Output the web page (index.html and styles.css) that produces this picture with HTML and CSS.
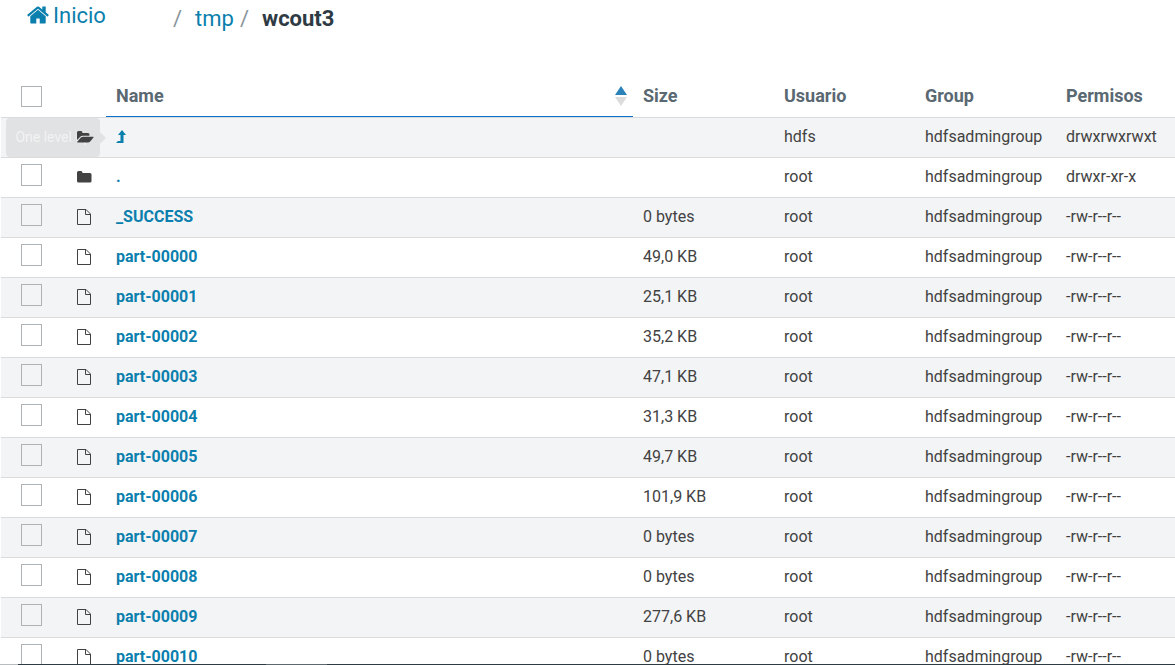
FILE: index.html
```
<!DOCTYPE html>
<html lang="es">
<head>
<meta charset="utf-8">
<title>wcout3</title>
<link rel="stylesheet" href="styles.css">
</head>
<body>
<svg class="sprite" aria-hidden="true">
  <symbol id="home" viewBox="0 0 1792 1792"><path d="M1472 992v480q0 26-19 45t-45 19h-384v-384h-256v384h-384q-26 0-45-19t-19-45v-480q0-1 .5-3t.5-3l575-474 575 474q1 2 1 6zm223-69l-62 74q-8 9-21 11h-3q-13 0-21-7l-692-577-692 577q-12 8-24 7-13-2-21-11l-62-74q-8-10-7-23.5t11-21.5l719-599q32-26 76-26t76 26l244 204v-195q0-14 9-23t23-9h192q14 0 23 9t9 23v408l219 182q10 8 11 21.5t-7 23.5z"/></symbol>
  <symbol id="folder-open" viewBox="0 0 18 16"><path d="M1 11V3.500Q1 2 2.500 2H5Q6.500 2 6.500 4H12Q13.500 4 13.500 5.500V6.800H7Q5 6.800 4 8Z"/><path d="M5 8.500Q5.700 7.800 7 7.800H17Q18 7.900 17.300 8.800L14.200 12.500Q13.200 13.500 12 13.500H1.700Q.8 13.400 1.400 12.500Z"/></symbol>
  <symbol id="folder" viewBox="0 0 18 16"><path d="M1 3.500Q1 2 2.500 2H5Q6.500 2 6.500 4H14Q15.500 4 15.500 5.500V12Q15.500 13.500 14 13.500H2.500Q1 13.500 1 12Z"/></symbol>
  <symbol id="file" viewBox="0 0 18 16"><path d="M1.500 .5H10L14.500 5V15.500H1.500ZM9.500 .5V5.500H14.500" fill="none" stroke="currentColor"/></symbol>
  <symbol id="level-up" viewBox="0 0 12 14"><path d="M0 13L2 11H4.500V5H2L6 0L10 5H7.500V13Z"/></symbol>
</svg>

<nav class="breadcrumb" aria-label="Ruta">
  <a class="home" href="#"><svg class="home-icon"><use href="#home"/></svg>Inicio</a>
  <ol class="path">
    <li><span class="slash">/</span><a href="#">tmp</a></li>
    <li><span class="slash">/</span><strong>wcout3</strong></li>
  </ol>
</nav>

<main class="browser">
<table class="files">
  <colgroup><col class="c-check"><col class="c-icon"><col class="c-name"><col class="c-attr"><col class="c-attr"><col class="c-attr"><col class="c-perm"></colgroup>
  <thead>
    <tr><th><input type="checkbox" aria-label="Seleccionar todo"></th><th></th><th class="sorted" aria-sort="ascending"><span class="sort-head">Name<svg class="sort" viewBox="0 0 12 20"><path class="up" d="M6 0L12 9H0Z"/><path class="down" d="M0 11H12L6 20Z"/></svg></span></th><th>Size</th><th>Usuario</th><th>Group</th><th>Permisos</th></tr>
  </thead>
  <tbody>
    <tr><td></td><td class="icon-cell"><svg class="icon"><use href="#folder-open"/></svg><span class="tooltip" role="tooltip">One level up</span></td><td><a href="#" aria-label="One level up"><svg class="up-icon"><use href="#level-up"/></svg></a></td><td></td><td>hdfs</td><td>hdfsadmingroup</td><td>drwxrwxrwxt</td></tr>
    <tr><td><input type="checkbox" aria-label="."></td><td><svg class="icon"><use href="#folder"/></svg></td><td><a href="#">.</a></td><td></td><td>root</td><td>hdfsadmingroup</td><td>drwxr-xr-x</td></tr>
    <tr><td><input type="checkbox" aria-label="_SUCCESS"></td><td><svg class="icon"><use href="#file"/></svg></td><td><a href="#">_SUCCESS</a></td><td>0 bytes</td><td>root</td><td>hdfsadmingroup</td><td>-rw-r--r--</td></tr>
    <tr><td><input type="checkbox" aria-label="part-00000"></td><td><svg class="icon"><use href="#file"/></svg></td><td><a href="#">part-00000</a></td><td>49,0 KB</td><td>root</td><td>hdfsadmingroup</td><td>-rw-r--r--</td></tr>
    <tr><td><input type="checkbox" aria-label="part-00001"></td><td><svg class="icon"><use href="#file"/></svg></td><td><a href="#">part-00001</a></td><td>25,1 KB</td><td>root</td><td>hdfsadmingroup</td><td>-rw-r--r--</td></tr>
    <tr><td><input type="checkbox" aria-label="part-00002"></td><td><svg class="icon"><use href="#file"/></svg></td><td><a href="#">part-00002</a></td><td>35,2 KB</td><td>root</td><td>hdfsadmingroup</td><td>-rw-r--r--</td></tr>
    <tr><td><input type="checkbox" aria-label="part-00003"></td><td><svg class="icon"><use href="#file"/></svg></td><td><a href="#">part-00003</a></td><td>47,1 KB</td><td>root</td><td>hdfsadmingroup</td><td>-rw-r--r--</td></tr>
    <tr><td><input type="checkbox" aria-label="part-00004"></td><td><svg class="icon"><use href="#file"/></svg></td><td><a href="#">part-00004</a></td><td>31,3 KB</td><td>root</td><td>hdfsadmingroup</td><td>-rw-r--r--</td></tr>
    <tr><td><input type="checkbox" aria-label="part-00005"></td><td><svg class="icon"><use href="#file"/></svg></td><td><a href="#">part-00005</a></td><td>49,7 KB</td><td>root</td><td>hdfsadmingroup</td><td>-rw-r--r--</td></tr>
    <tr><td><input type="checkbox" aria-label="part-00006"></td><td><svg class="icon"><use href="#file"/></svg></td><td><a href="#">part-00006</a></td><td>101,9 KB</td><td>root</td><td>hdfsadmingroup</td><td>-rw-r--r--</td></tr>
    <tr><td><input type="checkbox" aria-label="part-00007"></td><td><svg class="icon"><use href="#file"/></svg></td><td><a href="#">part-00007</a></td><td>0 bytes</td><td>root</td><td>hdfsadmingroup</td><td>-rw-r--r--</td></tr>
    <tr><td><input type="checkbox" aria-label="part-00008"></td><td><svg class="icon"><use href="#file"/></svg></td><td><a href="#">part-00008</a></td><td>0 bytes</td><td>root</td><td>hdfsadmingroup</td><td>-rw-r--r--</td></tr>
    <tr><td><input type="checkbox" aria-label="part-00009"></td><td><svg class="icon"><use href="#file"/></svg></td><td><a href="#">part-00009</a></td><td>277,6 KB</td><td>root</td><td>hdfsadmingroup</td><td>-rw-r--r--</td></tr>
    <tr><td><input type="checkbox" aria-label="part-00010"></td><td><svg class="icon"><use href="#file"/></svg></td><td><a href="#">part-00010</a></td><td>0 bytes</td><td>root</td><td>hdfsadmingroup</td><td>-rw-r--r--</td></tr>
  </tbody>
</table>
</main>
<div class="bottom-bar"></div>
</body>
</html>
```

FILE: styles.css
```
* { box-sizing: border-box; }
body {
  margin: 0;
  height: 100vh;
  overflow: hidden;
  background: #fff;
  color: #424242;
  font: 16px/20px Roboto, sans-serif;
}
a { color: #0b7fad; text-decoration: none; }
svg { fill: currentColor; }
.sprite { position: absolute; width: 0; height: 0; }

.breadcrumb {
  display: flex;
  align-items: flex-start;
  height: 76px;
  padding: 0 26px;
  font-size: 22px;
  line-height: 32px;
}
.home { display: flex; align-items: center; width: 147px; gap: 3px; }
.home-icon { width: 24px; height: 24px; margin-bottom: 2px; }
.path { display: flex; gap: 6px; margin: 0; padding: 3px 0 0; list-style: none; }
.path li { display: flex; gap: 13px; }
.slash { color: #8a949b; }
.path strong { color: #2f3b44; }

.browser { padding-left: 1px; }
.files { width: 100%; border-collapse: separate; border-spacing: 0; table-layout: fixed; }
.c-check { width: 65px; }
.c-icon { width: 40px; }
.c-attr { width: 141px; }
.c-perm { width: 119px; }
th, td { height: 40px; padding: 0 10px 2px; text-align: left; vertical-align: middle; white-space: nowrap; }
th { height: 41px; color: #5a6872; font-size: 18px; font-weight: 700; }
td { border-top: 1px solid #d9dbdd; }
th:first-child, td:first-child { padding-left: 20px; }
td a { font-weight: 700; }
tbody tr:nth-child(odd) { background: #f3f4f6; }
.sorted { padding-bottom: 1px; border-bottom: 1px solid #0b6fce; }
.sort-head { display: flex; align-items: center; justify-content: space-between; }
.sort { width: 12px; height: 20px; margin-right: -4px; }
.sort .up { fill: #2a82b8; }
.sort .down { fill: #dcdcdc; }
input[type="checkbox"] {
  appearance: none;
  display: block;
  width: 21px;
  height: 22px;
  margin: 0 0 4px;
  border: 1px solid #adb2b6;
}
th input[type="checkbox"] { height: 21px; margin: 2px 0 0; }
.icon { display: block; width: 18px; height: 16px; }
.icon-cell { position: relative; }
.icon-cell .icon { position: relative; z-index: 1; }
.up-icon { display: block; width: 12px; height: 14px; }
.tooltip {
  position: absolute;
  top: 0;
  right: 6px;
  padding: 9px 9px 10px;
  border-radius: 4px;
  background: rgba(0, 0, 0, 0.07);
  color: rgba(255, 255, 255, 0.6);
  font-size: 14px;
}
.tooltip::after {
  content: "";
  position: absolute;
  top: 14px;
  left: 100%;
  border: 6px solid transparent;
  border-right: 0;
  border-left-color: rgba(0, 0, 0, 0.07);
}
.bottom-bar {
  position: fixed;
  right: 0;
  bottom: 0;
  left: 0;
  height: 1px;
  background: linear-gradient(to right, #b8bcbe 18px, #2e3b43 18px, #2e3b43 266px, #5d686e 266px, #5d686e 327px, #2e3b43 327px);
}
```
